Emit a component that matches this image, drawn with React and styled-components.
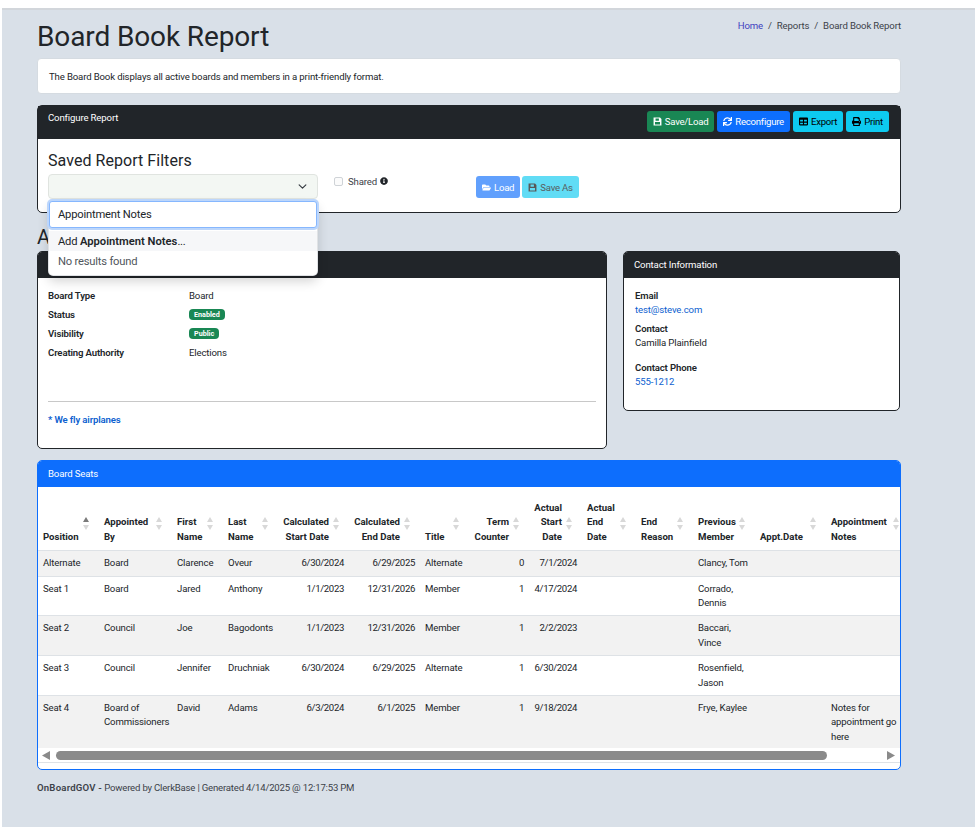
import React from 'react';
import styled, { createGlobalStyle } from 'styled-components';
import { FaSync, FaTable, FaPrint, FaFolderOpen, FaInfoCircle } from 'react-icons/fa';

const Global = createGlobalStyle`
  html, body { margin: 0; padding: 0; background: #fff; overflow: hidden; }
  body { font-family: Roboto, "Noto Sans", sans-serif; color: #212529; letter-spacing: -0.14px; }
  * { box-sizing: border-box; }
`;

const Page = styled.div`
  margin: 8px 0 0 2px;
  height: 819px;
  padding: 0 0 0 35px;
  background: #d9e0e8;
  border-top: 2px solid #d2d6db;
`;

const Main = styled.div`
  width: 864px;
  display: flex;
  flex-direction: column;
`;

const TitleRow = styled.div`
  display: flex;
  justify-content: space-between;
  align-items: flex-start;
  height: 48px;
`;

const Title = styled.h1`
  margin: 8px 0 0;
  font-size: 28px;
  line-height: 38px;
  font-weight: 400;
  letter-spacing: -0.12px;
`;

const Crumbs = styled.div`
  display: flex;
  gap: 5px;
  padding-top: 9px;
  font-size: 9.6px;
  line-height: 14px;
  color: #3c4248;
  a { color: #3f3fc0; text-decoration: none; }
`;

const Intro = styled.div`
  height: 36px;
  padding: 0 11px;
  display: flex;
  align-items: center;
  background: #fff;
  border: 1px solid #d5dbe1;
  border-radius: 4px;
  font-size: 9.6px;
`;

const Card = styled.section`
  background: #fff;
  border: 1px solid ${p => p.$tone || '#212529'};
  border-radius: 5px;
  overflow: hidden;
`;

const CardHead = styled.div`
  height: ${p => p.$h || 26}px;
  background: ${p => p.$tone || '#212529'};
  color: #fff;
  font-size: 9.6px;
  line-height: 14px;
  padding: 0 10px;
  display: flex;
  align-items: ${p => (p.$top ? 'flex-start' : 'center')};
  justify-content: space-between;
`;

const ConfigCard = styled(Card)`
  margin-top: 11px;
  height: 108px;
  overflow: visible;
  position: relative;
  z-index: 2;
`;

const HeadTitle = styled.span`
  padding-top: ${p => p.$top || 0}px;
`;

const Toolbar = styled.div`
  display: flex;
  gap: 3px;
  padding: 5px 1px 0 0;
`;

const Button = styled.button`
  height: ${p => p.$h || 21}px;
  padding: 0 6px;
  display: inline-flex;
  align-items: center;
  gap: 3px;
  border: 0;
  border-radius: 3px;
  font: inherit;
  font-size: 9.6px;
  letter-spacing: -0.25px;
  color: ${p => p.$ink || '#fff'};
  background: ${p => p.$bg};
  opacity: ${p => (p.$off ? 0.65 : 1)};
  svg { width: 9px; height: 9px; }
`;

const ConfigBody = styled.div`
  padding: 11px 10px 0;
`;

const Heading = styled.h2`
  margin: 0;
  font-size: 16px;
  line-height: 20px;
  font-weight: 400;
  letter-spacing: 0.05px;
  padding-top: 1px;
`;

const FilterRow = styled.div`
  margin-top: 3px;
  display: flex;
  align-items: flex-start;
`;

const SelectWrap = styled.div`
  position: relative;
  width: 270px;
`;

const SelectBox = styled.div`
  height: 25px;
  background: #f3f7f3;
  border: 1px solid #e0e4e0;
  border-radius: 4px;
  display: flex;
  align-items: center;
  justify-content: flex-end;
  padding-right: 10px;
  svg { width: 9px; height: 9px; }
`;

const Menu = styled.div`
  position: absolute;
  top: 27px;
  left: 1px;
  width: 268px;
  height: 74px;
  background: #fff;
  border-radius: 4px;
  box-shadow: 0 0 0 1px #e0e2e5, 0 6px 12px rgba(0, 0, 0, 0.18);
`;

const SearchInput = styled.div`
  height: 27px;
  padding: 0 8px;
  display: flex;
  align-items: center;
  font-size: 11.2px;
  letter-spacing: -0.2px;
  color: #212529;
  background: #fff;
  border: 1px solid #86b7fe;
  border-radius: 3px;
  box-shadow: 0 0 0 2px #bcd6fb;
`;

const MenuItem = styled.div`
  height: 20px;
  margin-top: ${p => (p.$first ? 3 : 0)}px;
  padding: 0 9px;
  display: flex;
  align-items: center;
  font-size: 11.2px;
  letter-spacing: -0.2px;
  color: ${p => (p.$muted ? '#50565c' : '#212529')};
  background: ${p => (p.$active ? '#f6f7f9' : 'transparent')};
  white-space: pre;
  b { font-weight: 600; letter-spacing: 0; }
`;

const Shared = styled.label`
  margin-left: 16px;
  width: 126px;
  display: flex;
  align-items: center;
  gap: 5px;
  height: 14px;
  font-size: 9.6px;
  color: #3c4248;
  svg { width: 8px; height: 8px; color: #212529; margin-left: -2px; }
`;

const Check = styled.span`
  width: 9px;
  height: 9px;
  border: 1px solid #cfd3d7;
  border-radius: 2px;
  background: #fbfbfb;
`;

const LoadGroup = styled.div`
  margin: 2px 0 0 16px;
  display: flex;
  gap: 2px;
`;

const BoardHeading = styled.div`
  margin-top: 10px;
  font-size: 20px;
  line-height: 28px;
  font-weight: 400;
`;

const Columns = styled.div`
  display: grid;
  grid-template-columns: 570px 277px;
  column-gap: 16px;
  align-items: start;
`;

const DetailBody = styled.div`
  height: 170px;
  padding: 8px 10px 0;
  font-size: 9.6px;
`;

const InfoRow = styled.div`
  display: grid;
  grid-template-columns: 141px 1fr;
  align-items: center;
  height: 19px;
  b { font-weight: 600; }
`;

const Badge = styled.span`
  justify-self: start;
  padding: 0 5px;
  height: 11px;
  display: inline-flex;
  align-items: center;
  border-radius: 4px;
  background: #198754;
  color: #fff;
  font-size: 7.2px;
  font-weight: 700;
  letter-spacing: 0;
`;

const Divider = styled.hr`
  margin: 39px 0 0;
  border: 0;
  border-top: 1px solid #c8c8c8;
`;

const Note = styled.div`
  margin-top: 11px;
  font-weight: 600;
  color: #0d5fd0;
  line-height: 14px;
`;

const ContactBody = styled.div`
  height: 132px;
  padding: 11px 11px 0;
  font-size: 9.6px;
  line-height: 14.4px;
`;

const ContactLabel = styled.div`
  font-weight: 600;
  margin-top: ${p => p.$gap || 0}px;
`;

const Link = styled.div`
  color: #0d5fd0;
`;

const SeatsCard = styled(Card)`
  margin-top: 11px;
  height: 310px;
`;

const Scroller = styled.div`
  padding-top: 9px;
  height: 261px;
  overflow: hidden;
`;

const Table = styled.table`
  width: 871px;
  table-layout: fixed;
  border-collapse: collapse;
  font-size: 9.6px;
  line-height: 14.4px;
`;

const HeadCell = styled.th`
  position: relative;
  padding: 5px 20px 6px 5px;
  font-weight: 700;
  letter-spacing: 0;
  vertical-align: bottom;
  text-align: ${p => (p.$right ? 'right' : 'left')};
  border-bottom: 1px solid #dee2e6;
`;

const Sort = styled.svg`
  position: absolute;
  right: 10px;
  bottom: 20px;
  width: 6px;
  height: 13px;
`;

const Row = styled.tr`
  background: ${p => (p.$odd ? '#f2f2f2' : '#fff')};
  border-bottom: 1px solid #dee2e6;
`;

const Cell = styled.td`
  padding: 5px;
  vertical-align: top;
  text-align: ${p => (p.$right ? 'right' : 'left')};
  letter-spacing: ${p => (p.$right ? '-0.35px' : 'inherit')};
`;

const ScrollBar = styled.div`
  height: 15px;
  display: flex;
  align-items: center;
  padding: 0 5px 0 4px;
  background: #fff;
  border-bottom: 1px solid #dee2e6;
`;

const Track = styled.div`
  flex: 1;
  padding: 0 8px 0 5px;
`;

const Thumb = styled.div`
  width: 771px;
  height: 9px;
  border-radius: 5px;
  background: #8a8a8a;
`;

const Arrow = styled.svg`
  width: 9px;
  height: 9px;
  fill: #8a8a8a;
`;

const Footer = styled.div`
  margin-top: 11px;
  font-size: 9.6px;
  line-height: 14px;
  letter-spacing: -0.2px;
  color: #3c4248;
  b { font-weight: 600; letter-spacing: 0.2px; }
`;

const columns = [
  { w: 61, label: ['Position'], asc: true },
  { w: 73, label: ['Appointed', 'By'] },
  { w: 51, label: ['First', 'Name'] },
  { w: 55, label: ['Last', 'Name'] },
  { w: 71, label: ['Calculated', 'Start Date'], right: true },
  { w: 71, label: ['Calculated', 'End Date'], right: true },
  { w: 49, label: ['Title'] },
  { w: 60, label: ['Term', 'Counter'], right: true },
  { w: 53, label: ['Actual', 'Start', 'Date'], right: true },
  { w: 54, label: ['Actual', 'End', 'Date'] },
  { w: 57, label: ['End', 'Reason'] },
  { w: 62, label: ['Previous', 'Member'] },
  { w: 71, label: ['Appt.Date'] },
  { w: 83, label: ['Appointment', 'Notes'] },
];

const rows = [
  ['Alternate', 'Board', 'Clarence', 'Oveur', '6/30/2024', '6/29/2025', 'Alternate', '0', '7/1/2024', '', '', 'Clancy, Tom', '', ''],
  ['Seat 1', 'Board', 'Jared', 'Anthony', '1/1/2023', '12/31/2026', 'Member', '1', '4/17/2024', '', '', 'Corrado, Dennis', '', ''],
  ['Seat 2', 'Council', 'Joe', 'Bagodonts', '1/1/2023', '12/31/2026', 'Member', '1', '2/2/2023', '', '', 'Baccari, Vince', '', ''],
  ['Seat 3', 'Council', 'Jennifer', 'Druchniak', '6/30/2024', '6/29/2025', 'Alternate', '1', '6/30/2024', '', '', 'Rosenfield, Jason', '', ''],
  ['Seat 4', 'Board of Commissioners', 'David', 'Adams', '6/3/2024', '6/1/2025', 'Member', '1', '9/18/2024', '', '', 'Frye, Kaylee', '', 'Notes for appointment go here'],
];

const SortIcon = ({ asc }) => (
  <Sort viewBox="0 0 6 13">
    <path d="M3 0 L6 5 H0 Z" fill={asc ? '#7a7a7a' : '#d8d8d8'} />
    <path d="M3 13 L0 8 H6 Z" fill="#d8d8d8" />
  </Sort>
);

const Chevron = () => (
  <svg viewBox="0 0 16 16" fill="none" stroke="#343a40" strokeWidth="2" strokeLinecap="round" strokeLinejoin="round">
    <path d="M2 5l6 6 6-6" />
  </svg>
);

// floppy outline like the old font-awesome save glyph
const Floppy = () => (
  <svg viewBox="0 0 16 16" fill="currentColor" fillRule="evenodd">
    <path d="M1 1h11.5L15 3.5V15H1zM4.5 2.5v4h6v-4zM3.5 9v4.5h9V9z" />
  </svg>
);

export default function App() {
  return (
    <Page>
      <Global />
      <Main>
        <TitleRow>
          <Title>Board Book Report</Title>
          <Crumbs>
            <a href="#home">Home</a><span>/</span><span>Reports</span><span>/</span><span>Board Book Report</span>
          </Crumbs>
        </TitleRow>
        <Intro>The Board Book displays all active boards and members in a print-friendly format.</Intro>

        <ConfigCard>
          <CardHead $h={33} $top>
            <HeadTitle $top={5}>Configure Report</HeadTitle>
            <Toolbar>
              <Button $bg="#198754"><Floppy />Save/Load</Button>
              <Button $bg="#0d6efd"><FaSync />Reconfigure</Button>
              <Button $bg="#0dcaf0" $ink="#000"><FaTable />Export</Button>
              <Button $bg="#0dcaf0" $ink="#000"><FaPrint />Print</Button>
            </Toolbar>
          </CardHead>
          <ConfigBody>
            <Heading>Saved Report Filters</Heading>
            <FilterRow>
              <SelectWrap>
                <SelectBox><Chevron /></SelectBox>
                <Menu>
                  <SearchInput>Appointment Notes</SearchInput>
                  <MenuItem $first $active>Add <b>Appointment Notes</b>...</MenuItem>
                  <MenuItem $muted>No results found</MenuItem>
                </Menu>
              </SelectWrap>
              <Shared><Check />Shared <FaInfoCircle /></Shared>
              <LoadGroup>
                <Button $h={22} $bg="#0d6efd" $off><FaFolderOpen />Load</Button>
                <Button $h={22} $bg="#0dcaf0" $ink="#000" $off><Floppy />Save As</Button>
              </LoadGroup>
            </FilterRow>
          </ConfigBody>
        </ConfigCard>

        <BoardHeading>A</BoardHeading>
        <Columns>
          <Card>
            <CardHead />
            <DetailBody>
              <InfoRow><b>Board Type</b><span>Board</span></InfoRow>
              <InfoRow><b>Status</b><Badge>Enabled</Badge></InfoRow>
              <InfoRow><b>Visibility</b><Badge>Public</Badge></InfoRow>
              <InfoRow><b>Creating Authority</b><span>Elections</span></InfoRow>
              <Divider />
              <Note>* We fly airplanes</Note>
            </DetailBody>
          </Card>
          <Card>
            <CardHead>Contact Information</CardHead>
            <ContactBody>
              <ContactLabel>Email</ContactLabel>
              <Link>test@steve.com</Link>
              <ContactLabel $gap={4}>Contact</ContactLabel>
              <div>Camilla Plainfield</div>
              <ContactLabel $gap={10}>Contact Phone</ContactLabel>
              <Link>555-1212</Link>
            </ContactBody>
          </Card>
        </Columns>

        <SeatsCard $tone="#0d6efd">
          <CardHead $tone="#0d6efd">Board Seats</CardHead>
          <Scroller>
            <Table>
              <colgroup>
                {columns.map(c => <col key={c.label.join()} width={c.w} />)}
              </colgroup>
              <thead>
                <tr>
                  {columns.map(c => (
                    <HeadCell key={c.label.join()} $right={c.right}>
                      {c.label.map((l, i) => <React.Fragment key={l}>{i > 0 && <br />}{l}</React.Fragment>)}
                      <SortIcon asc={c.asc} />
                    </HeadCell>
                  ))}
                </tr>
              </thead>
              <tbody>
                {rows.map((r, i) => (
                  <Row key={r[0]} $odd={i % 2 === 0}>
                    {r.map((v, j) => <Cell key={j} $right={columns[j].right}>{v}</Cell>)}
                  </Row>
                ))}
              </tbody>
            </Table>
          </Scroller>
          <ScrollBar>
            <Arrow viewBox="0 0 9 9"><path d="M8 0v9L0 4.5z" /></Arrow>
            <Track><Thumb /></Track>
            <Arrow viewBox="0 0 9 9"><path d="M1 0v9l8-4.5z" /></Arrow>
          </ScrollBar>
        </SeatsCard>

        <Footer><b>OnBoardGOV -</b> Powered by ClerkBase | Generated 4/14/2025 @ 12:17:53 PM</Footer>
      </Main>
    </Page>
  );
}
